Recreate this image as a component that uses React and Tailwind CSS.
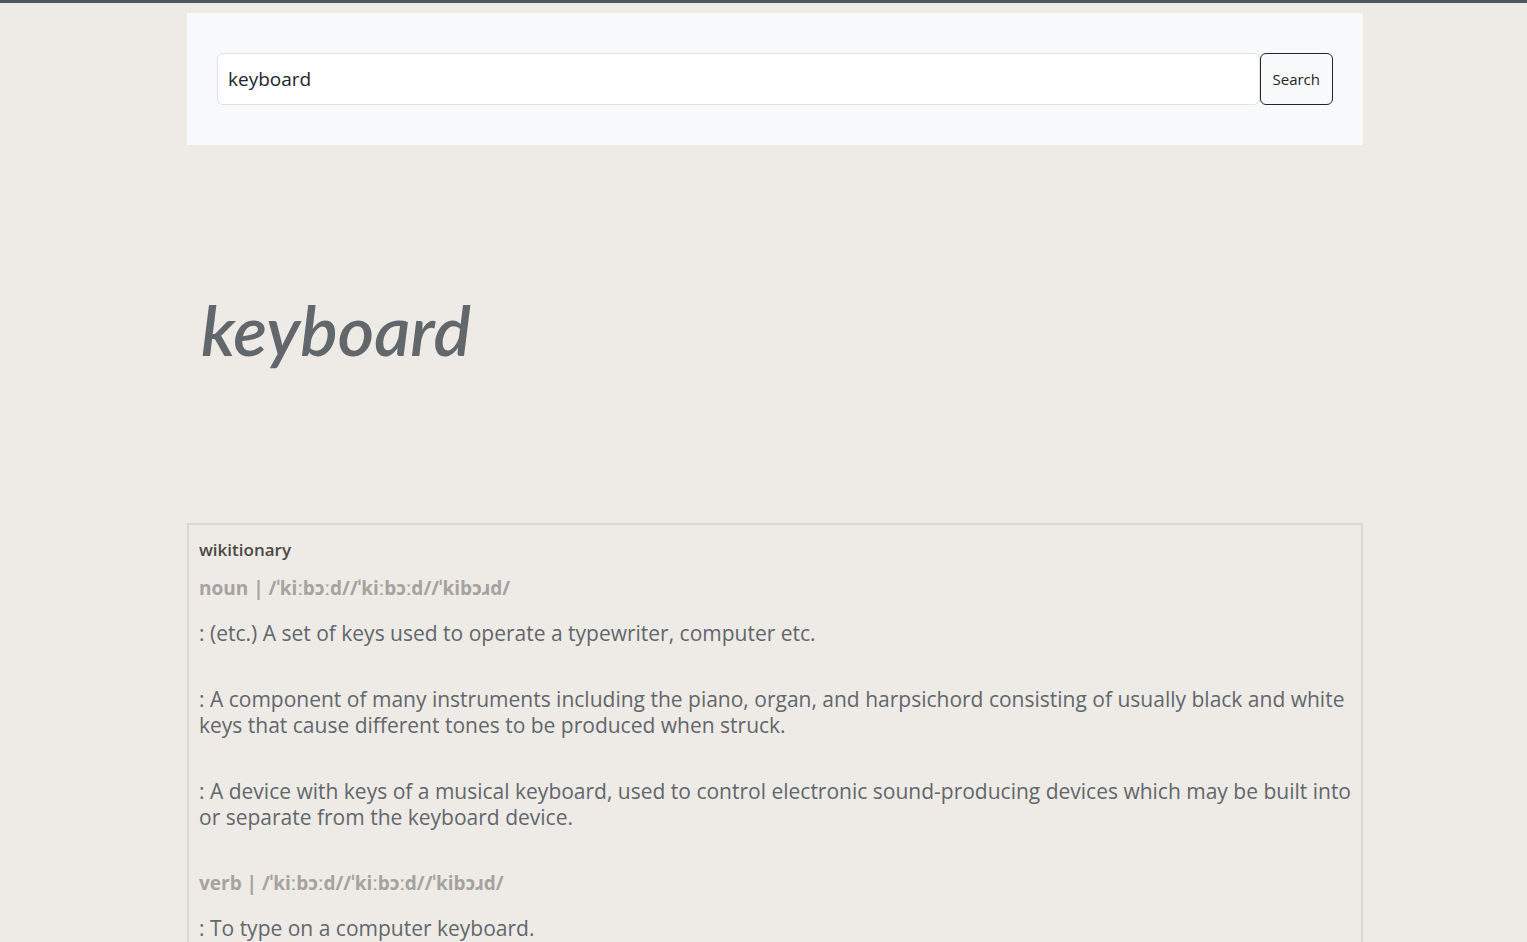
const entries = [
  {
    part: 'noun',
    definitions: [
      '(etc.) A set of keys used to operate a typewriter, computer etc.',
      'A component of many instruments including the piano, organ, and harpsichord consisting of usually black and white keys that cause different tones to be produced when struck.',
      'A device with keys of a musical keyboard, used to control electronic sound-producing devices which may be built into or separate from the keyboard device.',
    ],
  },
  { part: 'verb', definitions: ['To type on a computer keyboard.'] },
];

const pronunciation = '/ˈkiːbɔːd//ˈkiːbɔːd//ˈkibɔɹd/';

function SearchForm() {
  return (
    <form className="flex bg-[#f8f9fb] px-[30px] py-10" onSubmit={(e) => e.preventDefault()}>
      <input
        type="text"
        aria-label="Word"
        defaultValue="keyboard"
        className="h-[52px] min-w-0 flex-1 rounded-md border border-[#dee2e6] bg-white px-[10px] text-[19px] text-[#212529] outline-none"
      />
      <button type="submit" className="h-[52px] rounded-md border border-[#212529] px-3 text-[15px] text-[#212529]">
        Search
      </button>
    </form>
  );
}

function Entry({ part, definitions }) {
  return (
    <section className="flex flex-col gap-5">
      <h3 className="text-[19px] leading-6 font-bold text-[#a5a29f]">{`${part} | ${pronunciation}`}</h3>
      <div className="flex flex-col gap-10 text-[21px] leading-[26px] text-[#61676b]">
        {definitions.map((text) => (
          <p key={text}>{`: ${text}`}</p>
        ))}
      </div>
    </section>
  );
}

export default function App() {
  return (
    <div className="flex min-h-screen flex-col border-t-[3px] border-[#4a5a60] bg-[#eeebe6] pt-[10px] pl-[23px] font-['Open_Sans','Noto_Sans',sans-serif]">
      <main className="mx-auto flex w-full max-w-[1176px] flex-1 flex-col">
        <SearchForm />
        <h1 className="px-[14px] pt-36 pb-[154px] font-[Lato,sans-serif] text-[70px] leading-[80px] font-semibold text-[#61676b] italic">
          keyboard
        </h1>
        <article className="flex-1 border-2 border-b-0 border-[#dad7d2] pt-[14px] pr-[2px] pl-[10px]">
          <h2 className="mb-[15px] text-[17px] leading-[22px] font-semibold text-[#4b4845]">wikitionary</h2>
          <div className="flex flex-col gap-[41px]">
            {entries.map((entry) => (
              <Entry key={entry.part} {...entry} />
            ))}
          </div>
        </article>
      </main>
    </div>
  );
}
